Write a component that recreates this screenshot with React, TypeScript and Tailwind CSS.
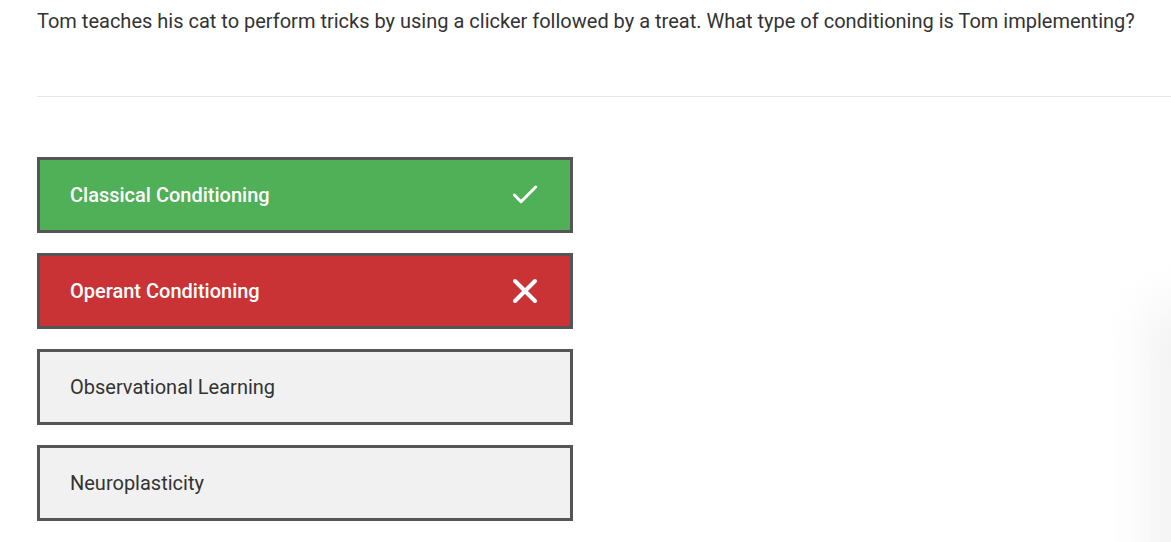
import { Check, X } from "lucide-react";

const options = [
  { label: "Classical Conditioning", state: "correct" },
  { label: "Operant Conditioning", state: "wrong" },
  { label: "Observational Learning", state: "none" },
  { label: "Neuroplasticity", state: "none" },
];

export default function App() {
  return (
    <div className="relative h-[542px] w-[1171px] overflow-hidden bg-white font-['Roboto',sans-serif]">
      <div className="pl-[37px] pt-[9px]">
        <p className="text-[20px] leading-[24px] text-[#333]">
          Tom teaches his cat to perform tricks by using a clicker followed by a treat. What type of conditioning is Tom implementing?
        </p>
        <div className="mt-[63px] h-px bg-[#e6e6e6]" />
        <div className="mt-[60px] flex w-[536px] flex-col gap-[20px]">
          {options.map((o) => (
            <Option key={o.label} label={o.label} state={o.state} />
          ))}
        </div>
      </div>
      <div className="pointer-events-none absolute right-[-30px] top-[300px] h-[320px] w-[50px] rounded-full bg-[#f0f0f0] blur-xl" />
    </div>
  );
}

const Option = ({ label, state }: { label: string; state: string }) => {
  const bg =
    state === "correct"
      ? "bg-[#50b057] text-white font-medium"
      : state === "wrong"
        ? "bg-[#c93335] text-white font-medium"
        : "bg-[#f1f1f1] text-[#333]";
  return (
    <div className={`flex h-[76px] items-center justify-between border-[3px] border-[#555] pl-[30px] pr-[25px] text-[20px] ${bg}`}>
      <span>{label}</span>
      <span className="flex w-[40px] items-center justify-center">
        {state === "correct" && <Check className="h-[32px] w-[32px]" strokeWidth={2.2} />}
        {state === "wrong" && <X className="h-[40px] w-[40px]" strokeWidth={2.4} />}
      </span>
    </div>
  );
};
